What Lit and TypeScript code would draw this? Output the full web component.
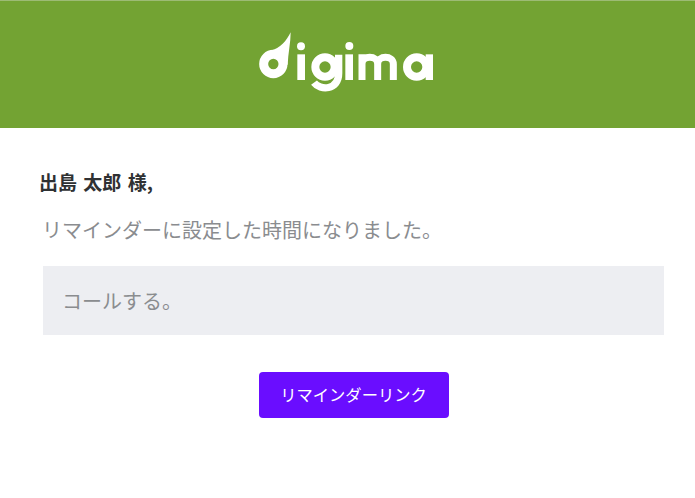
import { LitElement, html, css } from "lit";
import { customElement } from "lit/decorators.js";

@customElement("app-root")
export class AppRoot extends LitElement {
  static styles = css`
    :host {
      display: block;
      width: 695px;
      height: 498px;
      background: #fff;
      font-family: "Noto Sans CJK JP", "Liberation Sans", sans-serif;
      overflow: hidden;
    }
    .header {
      box-sizing: border-box;
      height: 128px;
      background: #73a333;
      border-top: 1px solid #9dbb75;
      display: flex;
      justify-content: center;
      padding: 19px 5px 0 0;
    }
    .logo { display: block; width: 210px; height: 85px; }
    .logo .s { fill: none; stroke: #fff; }
    .logo .f { fill: #fff; }
    .main { padding: 42px 31px 0 39px; }
    .name {
      margin: 0;
      font-size: 19px;
      line-height: 24px;
      word-spacing: 2px;
      font-weight: 700;
      color: #2f3133;
    }
    .intro {
      margin: 21px 0 0 3px;
      font-size: 20px;
      line-height: 30px;
      color: #8a8c8f;
    }
    .note {
      margin: 21px 0 0 4px;
      padding: 19px 20px 19px 19px;
      height: 31px;
      background: #edeef2;
      font-size: 20px;
      line-height: 31px;
      color: #8a8c8f;
    }
    .actions {
      display: flex;
      justify-content: center;
      margin-top: 37px;
      padding-left: 4px;
    }
    .btn {
      box-sizing: border-box;
      display: flex;
      align-items: center;
      justify-content: center;
      width: 190px;
      height: 46px;
      padding-bottom: 2px;
      border-radius: 4px;
      background: #6a0dff;
      color: #fff;
      font-size: 16.3px;
      text-decoration: none;
    }
  `;

  render() {
    return html`
      <div class="header">
        <svg class="logo" viewBox="0 0 630 255" role="img" aria-label="digima">
          <path class="f" d="M152 37 C152 70 144 100 143 135 L92 92 C120 86 140 62 152 37 Z" />
          <circle class="s" cx="100" cy="132" r="29" stroke-width="27" />
          <circle class="f" cx="183" cy="79" r="12" />
          <rect class="f" x="172" y="103" width="23" height="77" />
          <circle class="s" cx="255" cy="141" r="29" stroke-width="24" />
          <path class="s" stroke-width="22" d="M296 104 V160 C296 212 240 212 222 188" />
          <circle class="f" cx="328" cy="78" r="12" />
          <rect class="f" x="316" y="103" width="23" height="77" />
          <path class="s" stroke-width="21" d="M366 180 V103 M366 132 C366 105 413 105 413 132 V180 M413 132 C413 105 460 105 460 132 V180" />
          <circle class="s" cx="530" cy="141" r="29" stroke-width="24" />
          <rect class="f" x="557" y="103" width="22" height="77" />
        </svg>
      </div>
      <div class="main">
        <p class="name">出島 太郎 様,</p>
        <p class="intro">リマインダーに設定した時間になりました。</p>
        <div class="note">コールする。</div>
        <div class="actions"><a class="btn" href="#">リマインダーリンク</a></div>
      </div>
    `;
  }
}
